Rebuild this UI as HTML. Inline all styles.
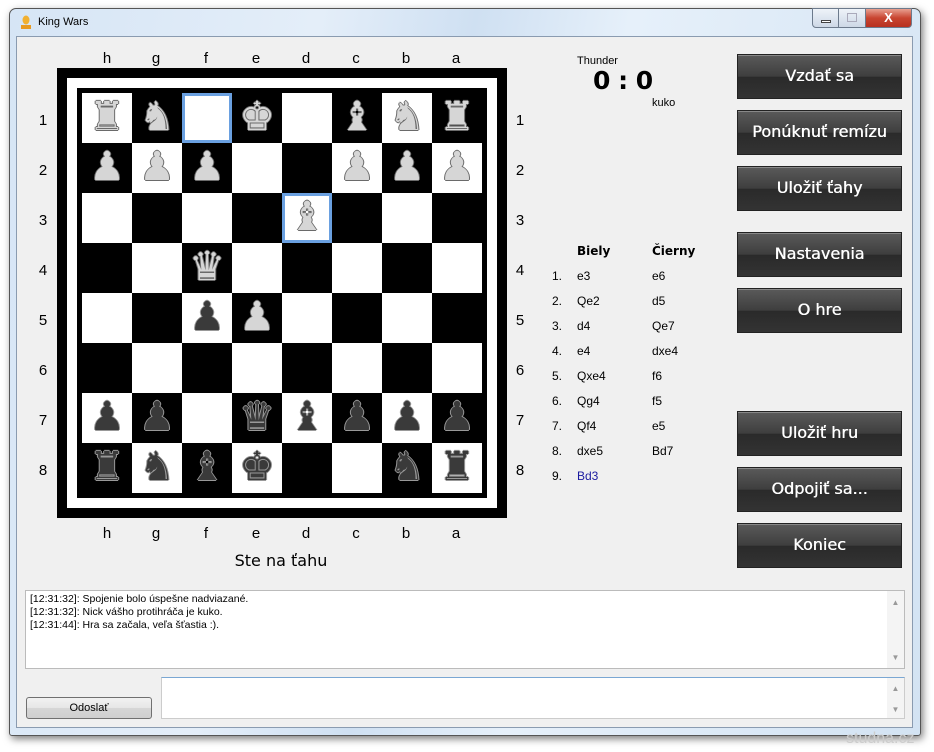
<!DOCTYPE html>
<html><head><meta charset="utf-8"><style>
*{margin:0;padding:0;box-sizing:border-box}
body{width:934px;height:752px;background:#fff;position:relative;overflow:hidden;font-family:"Liberation Sans","DejaVu Sans",sans-serif}
.win{position:absolute;left:9px;top:8px;width:912px;height:728px;border:1px solid #555;border-radius:7px 7px 3px 3px;background:linear-gradient(100deg,#d6e5f5 0%,#e4eef9 30%,#cfe0f2 45%,#e6f0fa 60%,#d3e3f3 100%);box-shadow:2px 3px 8px rgba(0,0,0,.5)}
.client{position:absolute;left:16px;top:36px;width:897px;height:692px;background:#f0f0f0;border:1px solid #8a9bb0}
.abs{position:absolute}
.title{left:38px;top:16px;font-size:11px;color:#000}
.ctrl{top:8px;height:20px;border:1px solid #6c7a8c}
.sq{position:absolute;width:50px;height:50px;font-family:"DejaVu Sans",sans-serif;font-size:40px;line-height:48px;text-align:center}
.w{color:#d6d6d6;text-shadow:1px 0 0 #6a6a6a,-1px 0 0 #6a6a6a,0 1px 0 #6a6a6a,0 -1px 0 #6a6a6a}
.b{color:#3a3a3a;text-shadow:1px 0 0 #999,-1px 0 0 #999,0 1px 0 #999,0 -1px 0 #999}
.hl{box-shadow:inset 0 0 0 3px #6aa0e0}
.lbl{position:absolute;font-size:15px;color:#000;width:20px;text-align:center}
.btn{position:absolute;left:737px;width:165px;height:45px;border:1px solid #222;background:linear-gradient(#5a5a5a,#3e3e3e 50%,#2a2a2a 51%,#333);color:#fff;font-family:"DejaVu Sans",sans-serif;font-size:16px;text-shadow:0.4px 0 0 #fff;text-align:center;line-height:42px;box-shadow:inset 0 1px 0 #888}
.mv{position:absolute;font-size:12px;color:#000}
.box{position:absolute;background:#fff;border:1px solid #bbb}
.sb{position:absolute;right:0;top:0;bottom:0;width:17px;background:#f4f4f4;color:#999;font-size:8px;text-align:center}
</style></head><body>
<div class="win">
</div>
<div class="abs" style="left:20px;top:14px;width:12px;height:16px;"><svg width="12" height="16"><ellipse cx="6" cy="6" rx="3.5" ry="4.5" fill="#f1b030"/><rect x="1" y="11" width="10" height="4" fill="#e89a20"/></svg></div>
<div class="abs title">King Wars</div>
<div class="abs ctrl" style="left:812px;width:27px;border-radius:0 0 0 4px;background:linear-gradient(#eef3f9,#cdd8e6)"><div class="abs" style="left:8px;top:11px;width:10px;height:3px;border:1px solid #444;background:#fff"></div></div>
<div class="abs ctrl" style="left:838px;width:28px;background:linear-gradient(#eef3f9,#cdd8e6)"><div class="abs" style="left:8px;top:4px;width:10px;height:9px;border:1px solid #aab"></div></div>
<div class="abs ctrl" style="left:865px;width:47px;border-radius:0 0 4px 0;background:linear-gradient(#e8a090,#c84530 50%,#b83020);color:#fff;font-weight:bold;text-align:center;font-size:13px;line-height:18px">X</div>
<div class="client"></div>

<div class="abs" style="left:57px;top:68px;width:450px;height:450px;background:#000"></div>
<div class="abs" style="left:67px;top:78px;width:430px;height:430px;background:#fff"></div>
<div class="abs" style="left:77px;top:88px;width:410px;height:410px;background:#000"></div>
<div id="board"></div>

<div class="lbl" style="left:97px;top:50px">h</div><div class="lbl" style="left:146px;top:50px">g</div><div class="lbl" style="left:196px;top:50px">f</div><div class="lbl" style="left:246px;top:50px">e</div><div class="lbl" style="left:296px;top:50px">d</div><div class="lbl" style="left:346px;top:50px">c</div><div class="lbl" style="left:396px;top:50px">b</div><div class="lbl" style="left:446px;top:50px">a</div>
<div class="lbl" style="left:97px;top:525px">h</div><div class="lbl" style="left:146px;top:525px">g</div><div class="lbl" style="left:196px;top:525px">f</div><div class="lbl" style="left:246px;top:525px">e</div><div class="lbl" style="left:296px;top:525px">d</div><div class="lbl" style="left:346px;top:525px">c</div><div class="lbl" style="left:396px;top:525px">b</div><div class="lbl" style="left:446px;top:525px">a</div>
<div id="nums"></div>
<div class="abs" style="left:181px;top:551px;width:200px;text-align:center;font-family:'DejaVu Sans',sans-serif;font-size:16px">Ste na ťahu</div>

<div class="abs" style="left:577px;top:55px;font-size:11px">Thunder</div>
<div class="abs" style="left:593px;top:66px;font-family:'DejaVu Sans',sans-serif;font-size:25px;font-weight:bold;letter-spacing:-0.5px">0 : 0</div>
<div class="abs" style="left:652px;top:97px;font-size:11px">kuko</div>

<div class="mv" style="left:577px;top:244px;font-weight:bold;font-family:'DejaVu Sans',sans-serif">Biely</div>
<div class="mv" style="left:652px;top:244px;font-weight:bold;font-family:'DejaVu Sans',sans-serif">Čierny</div>
<div id="moves"></div>

<div class="btn" style="top:54px">Vzdať sa</div>
<div class="btn" style="top:110px">Ponúknuť remízu</div>
<div class="btn" style="top:166px">Uložiť ťahy</div>
<div class="btn" style="top:232px">Nastavenia</div>
<div class="btn" style="top:288px">O hre</div>
<div class="btn" style="top:411px">Uložiť hru</div>
<div class="btn" style="top:467px">Odpojiť sa...</div>
<div class="btn" style="top:523px">Koniec</div>

<div class="box" style="left:25px;top:590px;width:880px;height:79px;font-size:10.5px;line-height:13px;padding:2px 4px">[12:31:32]: Spojenie bolo úspešne nadviazané.<br>[12:31:32]: Nick vášho protihráča je kuko.<br>[12:31:44]: Hra sa začala, veľa šťastia :).<div class="sb"><div style="margin-top:5px">▲</div><div style="position:absolute;bottom:4px;width:17px">▼</div></div></div>
<div class="box" style="left:161px;top:677px;width:744px;height:42px;border-color:#7aa7d3 #ccc #ccc #ccc"><div class="sb"><div style="margin-top:6px">▲</div><div style="position:absolute;bottom:4px;width:17px">▼</div></div></div>
<div class="abs" style="left:26px;top:697px;width:126px;height:22px;border:1px solid #707070;border-radius:3px;background:linear-gradient(#f2f2f2,#e6e6e6 50%,#d6d6d6 51%,#cfcfcf);font-size:11px;text-align:center;line-height:20px">Odoslať</div>
<div class="abs" style="left:846px;top:730px;font-size:16px;color:#ccc">studna.cz</div>

<script>
var B=[
"RN.K.BNR",
"PPP..PPP",
"....B...",
"..Q.....",
"..pP....",
"........",
"pp.qbppp",
"rnbk..nr"];
var G={r:'♜',n:'♞',b:'♝',q:'♛',k:'♚',p:'♟'};
var h='';
for(var r=0;r<8;r++)for(var c=0;c<8;c++){
var ch=B[r][c];var white=(r+c)%2==0;
var cls='sq';if((r==0&&c==2)||(r==2&&c==4))cls+=' hl';
var t='';if(ch!='.'){var lo=ch.toLowerCase();t='<span class="'+(ch==lo?'b':'w')+'">'+G[lo]+'\uFE0E</span>';}
h+='<div class="'+cls+'" style="left:'+(82+c*50)+'px;top:'+(93+r*50)+'px;background:'+(white?'#fff':'#000')+'">'+t+'</div>';}
document.getElementById('board').innerHTML=h;
var n='';for(var i=0;i<8;i++){n+='<div class="lbl" style="left:33px;top:'+(112+i*50)+'px">'+(i+1)+'</div><div class="lbl" style="left:510px;top:'+(112+i*50)+'px">'+(i+1)+'</div>';}
document.getElementById('nums').innerHTML=n;
var M=[["e3","e6"],["Qe2","d5"],["d4","Qe7"],["e4","dxe4"],["Qxe4","f6"],["Qg4","f5"],["Qf4","e5"],["dxe5","Bd7"],["Bd3",""]];
var m='';for(var i=0;i<M.length;i++){var y=269+i*25;m+='<div class="mv" style="left:552px;top:'+y+'px">'+(i+1)+'.</div><div class="mv" style="left:577px;top:'+y+'px;'+(i==8?'color:#1a1aa0':'')+'">'+M[i][0]+'</div><div class="mv" style="left:652px;top:'+y+'px">'+M[i][1]+'</div>';}
document.getElementById('moves').innerHTML=m;
</script>
</body></html>
